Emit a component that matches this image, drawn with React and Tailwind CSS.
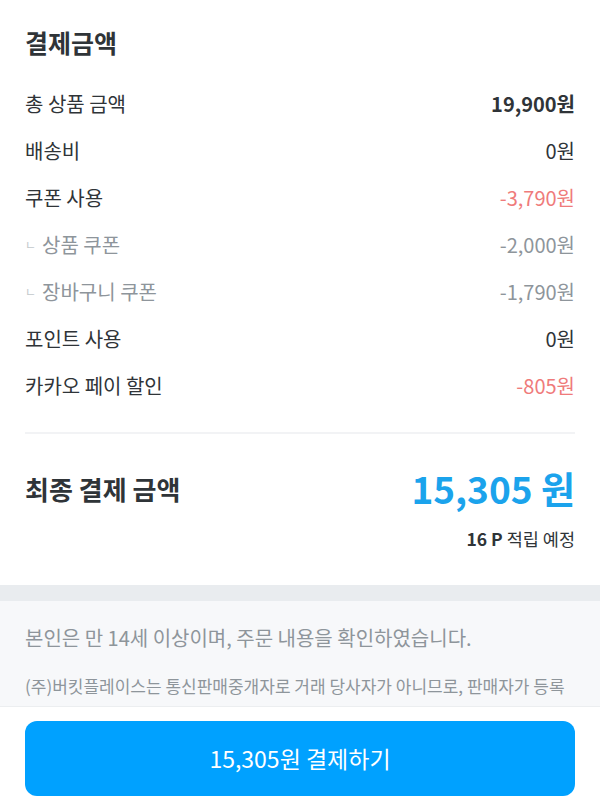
import React from "react";

const rows = [
  { label: "총 상품 금액", value: "19,900원", tone: "bold" },
  { label: "배송비", value: "0원" },
  { label: "쿠폰 사용", value: "-3,790원", tone: "red" },
  { label: "상품 쿠폰", value: "-2,000원", sub: true },
  { label: "장바구니 쿠폰", value: "-1,790원", sub: true },
  { label: "포인트 사용", value: "0원" },
  { label: "카카오 페이 할인", value: "-805원", tone: "red" },
];

function Row({ label, value, tone, sub }) {
  const valueClass =
    tone === "bold"
      ? "font-bold text-[#2f3438]"
      : tone === "red"
      ? "text-[#ef7b7b]"
      : sub
      ? "text-[#8e959b]"
      : "text-[#2f3438]";
  return (
    <div className="flex h-[47px] items-center justify-between text-[20px]">
      <div className={sub ? "flex items-center text-[#8e959b]" : "text-[#2f3438]"}>
        {sub && <span className="mr-[6px] text-[12px] text-[#c2c8cc]">ㄴ</span>}
        {label}
      </div>
      <div className={valueClass}>{value}</div>
    </div>
  );
}

export default function App() {
  return (
    <div
      className="flex h-[804px] w-[600px] flex-col overflow-hidden bg-white"
      style={{ fontFamily: '"Noto Sans CJK KR", "Noto Sans", sans-serif' }}
    >
      <div className="px-[25px]">
        <h2 className="mt-[30px] text-[25px] font-bold leading-[25px] text-[#2f3438]">결제금액</h2>
        <div className="mt-[25px]">
          {rows.map((r) => (
            <Row key={r.label} {...r} />
          ))}
        </div>
        <div className="mt-[23px] h-[2px] bg-[#f2f3f5]" />
        <div className="mt-[36px] flex h-[37px] items-center justify-between">
          <div className="text-[26px] font-bold text-[#2f3438]">최종 결제 금액</div>
          <div className="text-[37px] font-bold leading-none text-[#1ba3ec]">15,305 원</div>
        </div>
        <div className="mt-[19px] text-right text-[17.5px] leading-[26px] text-[#2f3438]">
          <span className="font-semibold">16 P</span> 적립 예정
        </div>
      </div>

      <div className="mt-[33px] h-[16px] shrink-0 bg-[#e9ecef]" />
      <div className="h-[105px] shrink-0 overflow-hidden bg-[#f7f8fa] px-[25px] pt-[22px]">
        <div className="text-[20px] leading-[30px] text-[#8e959b]">
          본인은 만 14세 이상이며, 주문 내용을 확인하였습니다.
        </div>
        <div className="mt-[13px] text-[17px] leading-[40px] text-[#8e959b]">
          (주)버킷플레이스는 통신판매중개자로 거래 당사자가 아니므로, 판매자가 등록한 상품정보 및 거래에 대해 책임을 지지 않습니다.
        </div>
      </div>
      <div className="h-[1px] shrink-0 bg-[#eceef0]" />

      <div className="px-[25px] pt-[14px]">
        <button className="flex h-[75px] w-full items-center justify-center rounded-[12px] bg-[#00a1ff] text-[23px] font-normal text-white">
          15,305원 결제하기
        </button>
      </div>
    </div>
  );
}
